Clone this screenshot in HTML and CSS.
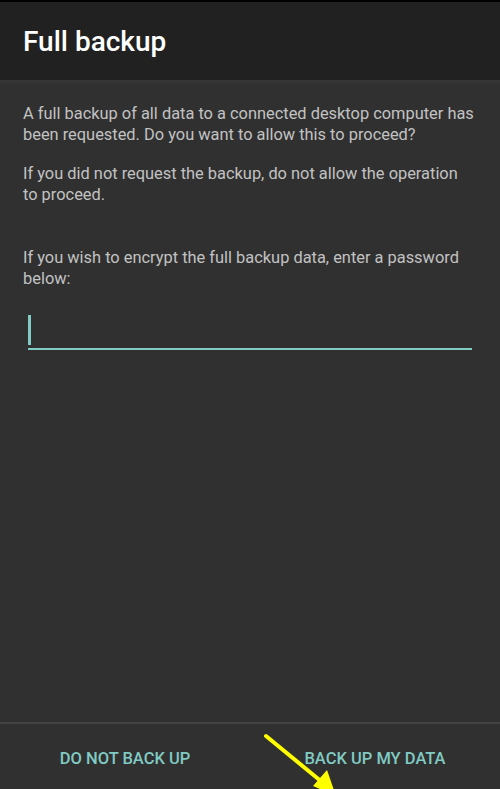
FILE: index.html
```html
<!DOCTYPE html>
<html>
<head>
<meta charset="utf-8">
<link rel="stylesheet" href="styles.css">
</head>
<body>
<div class="screen">
  <div class="statusbar"></div>
  <header class="titlebar"><h1 class="title">Full backup</h1></header>
  <main class="content">
    <p class="msg">A full backup of all data to a connected desktop computer has been requested. Do you want to allow this to proceed?</p>
    <p class="msg">If you did not request the backup, do not allow the operation<br>to proceed.</p>
    <p class="msg msg-encrypt">If you wish to encrypt the full backup data, enter a password below:</p>
    <div class="field"><span class="cursor"></span></div>
  </main>
  <footer class="actions">
    <button class="action">DO NOT BACK UP</button>
    <button class="action">BACK UP MY DATA</button>
  </footer>
  <svg class="annotation" width="500" height="789" viewBox="0 0 500 789">
    <line x1="266" y1="736" x2="322" y2="782" stroke="#ffff00" stroke-width="4" stroke-linecap="round"/>
    <polygon points="336,796 313,786 327,770" fill="#ffff00"/>
  </svg>
</div>
</body>
</html>
```
FILE: styles.css
```css
* { box-sizing: border-box; }
html, body { margin: 0; padding: 0; }
body {
  background: #303030;
  font-family: Roboto, "Liberation Sans", sans-serif;
  width: 500px;
  height: 789px;
  overflow: hidden;
}
.screen {
  position: relative;
  width: 500px;
  height: 789px;
  display: flex;
  flex-direction: column;
  background: #303030;
}
.statusbar {
  height: 2px;
  background: #000;
  flex: none;
}
.titlebar {
  height: 78px;
  flex: none;
  background: #212121;
  display: flex;
  align-items: center;
  padding: 0 23px;
}
.title {
  margin: 0;
  color: #ffffff;
  font-size: 28px;
  font-weight: 500;
  letter-spacing: 0;
}
.content {
  flex: 1;
  padding: 23px 20px 0 23px;
  background: linear-gradient(to bottom, #373737 0, #303030 5px, #303030 100%);
}
.msg {
  margin: 0 0 18px 0;
  color: #c2c2c2;
  font-size: 16.4px;
  line-height: 21px;
}
.msg-encrypt {
  margin-top: 42px;
  margin-bottom: 26px;
}
.field {
  margin: 0 5px;
  width: 444px;
  height: 35px;
  border-bottom: 2px solid #80cbc4;
  display: flex;
  align-items: flex-end;
  padding-bottom: 3px;
}
.cursor {
  display: block;
  width: 3px;
  height: 30px;
  background: #80cbc4;
}
.actions {
  flex: none;
  height: 67px;
  border-top: 2px solid #424242;
  display: flex;
}
.action {
  flex: 1;
  background: none;
  border: 0;
  padding: 3px 0 0 0;
  margin: 0;
  color: #80cbc4;
  font-family: Roboto, "Liberation Sans", sans-serif;
  font-size: 16.5px;
  font-weight: 500;
  text-align: center;
}
.annotation {
  position: absolute;
  left: 0;
  top: 0;
  pointer-events: none;
}
```
